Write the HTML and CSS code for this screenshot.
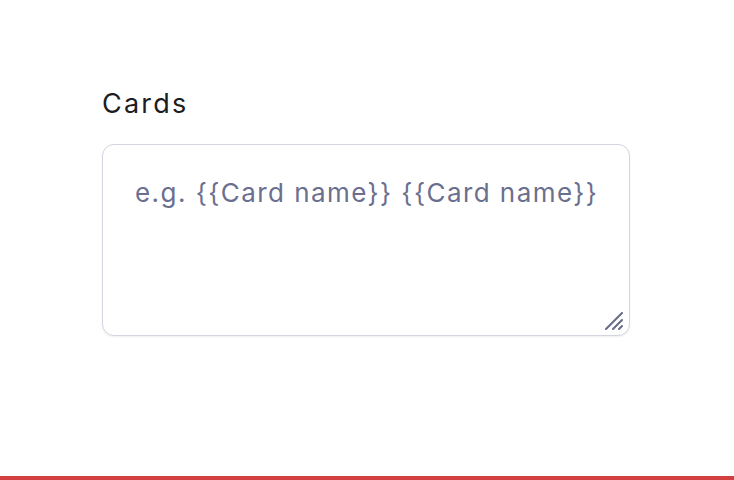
FILE: index.html
```html
<!DOCTYPE html>
<html lang="en">
<head>
<meta charset="utf-8">
<title>Cards</title>
<link rel="stylesheet" href="styles.css">
</head>
<body>
<div class="page">
  <main class="content">
    <div class="field">
      <label class="label" for="cards">Cards</label>
      <div class="input-wrap">
        <textarea id="cards" class="input" placeholder="e.g. {{Card name}} {{Card name}}"></textarea>
        <svg class="grip" width="20" height="18" viewBox="0 0 20 18" aria-hidden="true">
          <path d="M2 17 L18 1 M9 17 L18 8 M15 17 L18 14" stroke="#676b88" stroke-width="2" stroke-linecap="round" fill="none"/>
        </svg>
      </div>
    </div>
  </main>
  <div class="bar"></div>
</div>
</body>
</html>
```

FILE: styles.css
```css
html, body {
  margin: 0;
  padding: 0;
  background: #ffffff;
}
body {
  font-family: Inter, "Noto Sans", sans-serif;
}
.page {
  height: 480px;
  display: flex;
  flex-direction: column;
}
.content {
  flex: 1;
  display: flex;
  justify-content: flex-start;
  padding-top: 88px;
  padding-left: 102px;
}
.field {
  width: 528px;
  display: flex;
  flex-direction: column;
  gap: 24px;
}
.label {
  font-size: 27px;
  line-height: 32px;
  color: #1c1c22;
  letter-spacing: 2.2px;
}
.input-wrap {
  position: relative;
  width: 528px;
  height: 192px;
}
.input {
  box-sizing: border-box;
  display: block;
  width: 528px;
  height: 192px;
  margin: 0;
  border: 1px solid #d5d5df;
  border-radius: 12px;
  padding: 30px 30px 28px 32px;
  font-family: Inter, "Noto Sans", sans-serif;
  font-size: 26px;
  line-height: 36px;
  letter-spacing: 1.45px;
  color: #333;
  resize: none;
  outline: none;
  box-shadow: 0 1px 2px rgba(20, 20, 40, 0.07);
}
.input::placeholder {
  color: #6b6f8e;
  opacity: 1;
}
.grip {
  position: absolute;
  right: 6px;
  bottom: 6px;
}
.bar {
  height: 4px;
  background: #d23f3f;
}
```
